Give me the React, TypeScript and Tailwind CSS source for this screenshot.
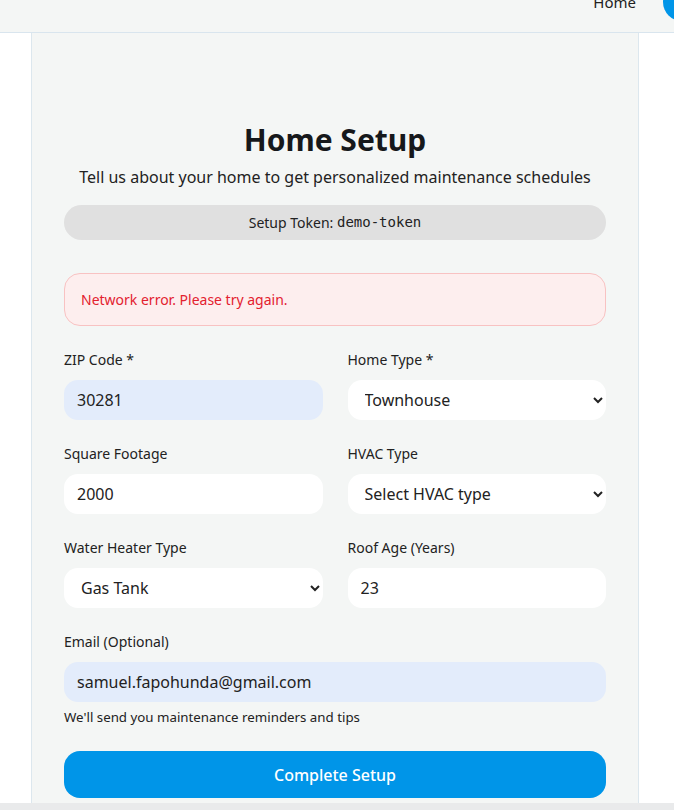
import { useState } from "react"

const font = { fontFamily: '"Noto Sans", "Open Sans", sans-serif' }

function Field({ label, children }: { label: string; children: React.ReactNode }) {
  return (
    <div className="flex flex-col">
      <label className="mb-[10px] text-[14px] leading-[20px] text-[#222]">{label}</label>
      {children}
    </div>
  )
}

const inputCls =
  "h-10 w-full rounded-[14px] border-0 px-[13px] text-[16px] text-[#222] outline-none"
const selectCls =
  "h-10 w-full rounded-[14px] border-0 bg-white pl-[13px] pr-[4px] text-[16px] text-[#222] outline-none"

export default function App() {
  const [zip, setZip] = useState("30281")
  const [homeType, setHomeType] = useState("townhouse")
  const [sqft, setSqft] = useState("2000")
  const [hvac, setHvac] = useState("")
  const [heater, setHeater] = useState("gas_tank")
  const [roof, setRoof] = useState("23")
  const [email, setEmail] = useState("samuel.fapohunda@gmail.com")

  return (
    <div className="h-[810px] overflow-hidden bg-white" style={font}>
      {/* top nav, partly scrolled away */}
      <header className="h-[33px] overflow-hidden border-b border-[#d9e5ee] bg-[#f4f6f5]">
        <div className="flex h-[36px] -translate-y-[16px] items-center justify-end gap-[27px]">
          <span className="text-[15px] text-[#222]">Home</span>
          <span className="-mr-[27px] h-[38px] w-[38px] shrink-0 rounded-full bg-[#0095e8]" />
        </div>
      </header>

      <main className="ml-[31px] w-[608px] border-x border-[#dce7ee] bg-[#f4f6f5] px-8 pb-[5px] pt-[88px]">
        <h1 className="text-center text-[30px] font-bold leading-[38px] text-[#16181b]">Home Setup</h1>
        <p className="mt-[6px] text-center text-[16px] leading-[24px] text-[#222]">
          Tell us about your home to get personalized maintenance schedules
        </p>

        <div className="mt-4 flex h-[35px] items-center justify-center rounded-full bg-[#e0e0e0] text-[14px] text-[#222]">
          Setup Token:&nbsp;
          <code style={{ fontFamily: '"DejaVu Sans Mono", monospace' }} className="text-[14px]">
            demo-token
          </code>
        </div>

        <div className="mt-[33px] flex h-[53px] items-center rounded-[16px] border border-[#f8c2c2] bg-[#fdeeee] px-4 text-[14px] text-[#e3212f]">
          Network error. Please try again.
        </div>

        <form className="mt-6 grid grid-cols-2 gap-x-[25px] gap-y-6" onSubmit={(e) => e.preventDefault()}>
          <Field label="ZIP Code *">
            <input className={`${inputCls} bg-[#e3ecfb]`} value={zip} onChange={(e) => setZip(e.target.value)} />
          </Field>
          <Field label="Home Type *">
            <select className={selectCls} value={homeType} onChange={(e) => setHomeType(e.target.value)}>
              <option value="single_family">Single Family</option>
              <option value="townhouse">Townhouse</option>
              <option value="condo">Condo</option>
            </select>
          </Field>
          <Field label="Square Footage">
            <input className={`${inputCls} bg-white`} value={sqft} onChange={(e) => setSqft(e.target.value)} />
          </Field>
          <Field label="HVAC Type">
            <select className={selectCls} value={hvac} onChange={(e) => setHvac(e.target.value)}>
              <option value="">Select HVAC type</option>
              <option value="central">Central Air</option>
              <option value="heat_pump">Heat Pump</option>
            </select>
          </Field>
          <Field label="Water Heater Type">
            <select className={selectCls} value={heater} onChange={(e) => setHeater(e.target.value)}>
              <option value="gas_tank">Gas Tank</option>
              <option value="electric_tank">Electric Tank</option>
              <option value="tankless">Tankless</option>
            </select>
          </Field>
          <Field label="Roof Age (Years)">
            <input className={`${inputCls} bg-white`} value={roof} onChange={(e) => setRoof(e.target.value)} />
          </Field>
          <div className="col-span-2">
            <Field label="Email (Optional)">
              <input className={`${inputCls} bg-[#e3ecfb]`} value={email} onChange={(e) => setEmail(e.target.value)} />
            </Field>
            <p className="mt-[6px] text-[13.3px] leading-[18px] text-[#222]">We'll send you maintenance reminders and tips</p>
          </div>
          <button
            type="submit"
            className="col-span-2 mt-px h-[47px] rounded-[16px] bg-[#0095e8] text-[16px] font-medium text-white"
          >
            Complete Setup
          </button>
        </form>
      </main>
      <div className="h-[10px] bg-[#e9eaeb]" />
    </div>
  )
}
